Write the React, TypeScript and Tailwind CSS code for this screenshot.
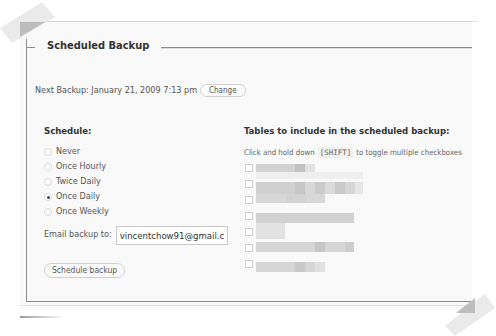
import React from "react";

const radios = [
  { label: "Never", checked: false },
  { label: "Once Hourly", checked: false },
  { label: "Twice Daily", checked: false },
  { label: "Once Daily", checked: true },
  { label: "Once Weekly", checked: false },
];

// mosaic blocks (x, y, w, h, fill) relative to (256,160)
const mosaic: [number, number, number, number, string][] = [
  [0, 5, 39, 10, "#d2d2d2"],
  [39, 5, 10, 10, "#c2c2c2"],
  [49, 5, 10, 10, "#e2e2e2"],
  [0, 13, 107, 7, "#efefef"],
  [0, 23, 39, 12, "#d0d0d0"],
  [39, 23, 10, 12, "#c6c6c6"],
  [49, 23, 10, 12, "#d8d8d8"],
  [59, 23, 10, 12, "#cbcbcb"],
  [69, 23, 10, 12, "#dadada"],
  [79, 23, 10, 12, "#c9c9c9"],
  [89, 23, 10, 12, "#d6d6d6"],
  [99, 23, 8, 12, "#e6e6e6"],
  [0, 35, 69, 9, "#d8d8d8"],
  [30, 35, 20, 9, "#d3d3d3"],
  [0, 54, 98, 10, "#d1d1d1"],
  [0, 64, 29, 16, "#e2e2e2"],
  [0, 83, 98, 10, "#d6d6d6"],
  [59, 83, 10, 10, "#c7c7c7"],
  [89, 83, 9, 10, "#cdcdcd"],
  [0, 103, 69, 10, "#d6d6d6"],
  [39, 103, 10, 10, "#c8c8c8"],
  [59, 103, 10, 10, "#e0e0e0"],
];

export default function App() {
  return (
    <div className="relative w-[496px] h-[336px] bg-white overflow-hidden font-['DejaVu_Sans_Condensed','DejaVu_Sans',sans-serif]">
      {/* paper */}
      <div className="ml-[20px] mt-[21px] w-[452px] h-[290px] border-t border-[#d2d2d2] bg-[#f9f9f9] pl-[6px] pt-[25px]">
        {/* fieldset */}
        <div className="h-[263px] border-l border-b border-[#8c8c8c]">
          <div className="-mt-[8px] h-[16px] flex items-center">
            <div className="w-[8px] h-px bg-[#8c8c8c]" />
            <div className="px-[12px] -mt-[3px] text-[11px] font-bold text-[#333] leading-[16px]">Scheduled Backup</div>
            <div className="flex-1 h-px bg-[#8c8c8c] shadow-[0_1px_0_#dcdcdc]" />
          </div>

          <div className="mt-[29px] pl-[8px] flex items-center gap-[3px] text-[9px] text-[#555]">
            <span>Next Backup: January 21, 2009 7:13 pm</span>
            <button className="h-[13px] px-[8px] rounded-full border border-[#cfcfcf] bg-[#fbfbfb] text-[8px] text-[#555] leading-[11px]">Change</button>
          </div>

          <div className="mt-[27px] pl-[17px] flex">
            <div className="w-[200px]">
              <div className="h-[12px] leading-[12px] text-[9.5px] font-bold text-[#333]">Schedule:</div>
              <div className="mt-[8px]">
                {radios.map((r) => (
                  <div key={r.label} className="h-[15px] flex items-center gap-[4px] text-[9px] text-[#555]">
                    <span className="w-[8px] h-[8px] rounded-full border border-[#d8d8d8] bg-white flex items-center justify-center">
                      {r.checked && <span className="w-[3px] h-[3px] rounded-full bg-[#444]" />}
                    </span>
                    <span>{r.label}</span>
                  </div>
                ))}
              </div>
              <div className="mt-[6px] flex items-center gap-[4px] text-[9px] text-[#555]">
                <span>Email backup to:</span>
                <div className="w-[112px] h-[19px] border border-[#c8c8c8] bg-white pl-[3px] text-[9.5px] text-[#333] leading-[17px] whitespace-nowrap">
                  vincentchow91@gmail.c
                </div>
              </div>
              <button className="mt-[18px] h-[15px] px-[7px] rounded-full border border-[#cfcfcf] bg-[#fbfbfb] text-[8.5px] text-[#555] leading-[13px]">
                Schedule backup
              </button>
            </div>

            <div className="flex-1">
              <div className="h-[12px] leading-[12px] text-[9.5px] font-bold text-[#333]">Tables to include in the scheduled backup:</div>
              <div className="mt-[10px] h-[12px] flex items-center text-[7.8px] text-[#666] whitespace-nowrap">
                <span>Click and hold down</span>
                <code className="mx-[3px] px-[2px] bg-[#f0f0f0] font-['DejaVu_Sans_Mono',monospace] text-[7.5px]">[SHIFT]</code>
                <span>to toggle multiple checkboxes</span>
              </div>
              <div className="mt-[1px] flex gap-[3px]">
                <div className="flex flex-col">
                  {[0, 1, 2, 3, 4, 5, 6].map((i) => (
                    <div key={i} className="h-[16px] flex items-center pl-[1px]">
                      <span className="w-[8px] h-[8px] border border-[#cfcfcf] bg-white" />
                    </div>
                  ))}
                </div>
                <svg width="110" height="116" viewBox="0 0 110 116" className="-mt-[1px]">
                  {mosaic.map(([x, y, w, h, f], i) => (
                    <rect key={i} x={x} y={y} width={w} height={h} fill={f} />
                  ))}
                </svg>
              </div>
            </div>
          </div>
        </div>
        <div className="mt-[3px] -ml-[6px] h-px bg-[#e2e2e2]" />
      </div>
      {/* top edge extension */}
      <div className="absolute left-[472px] top-[21px] w-[6px] h-px bg-[#e4e4e4]" />
      {/* bottom-left shadow */}
      <div className="absolute left-[20px] top-[316px] w-[45px] h-[2px] bg-gradient-to-r from-[#9a9a9a] to-transparent" />

      {/* tapes */}
      <svg className="absolute left-0 top-0" width="60" height="50" viewBox="0 0 60 50">
        <polygon points="0,28 42,2 55,17 12,43" fill="#e8e8e8" fillOpacity="0.9" />
        <polygon points="20,22 45,22 20,37" fill="#bdbdbd" />
      </svg>
      <svg className="absolute left-[440px] top-[290px]" width="56" height="46" viewBox="0 0 56 46">
        <polygon points="5,36 45,4 55,18 15,46" fill="#e8e8e8" fillOpacity="0.9" />
        <polygon points="35,8 35,23 16,23" fill="#bdbdbd" />
      </svg>
    </div>
  );
}
